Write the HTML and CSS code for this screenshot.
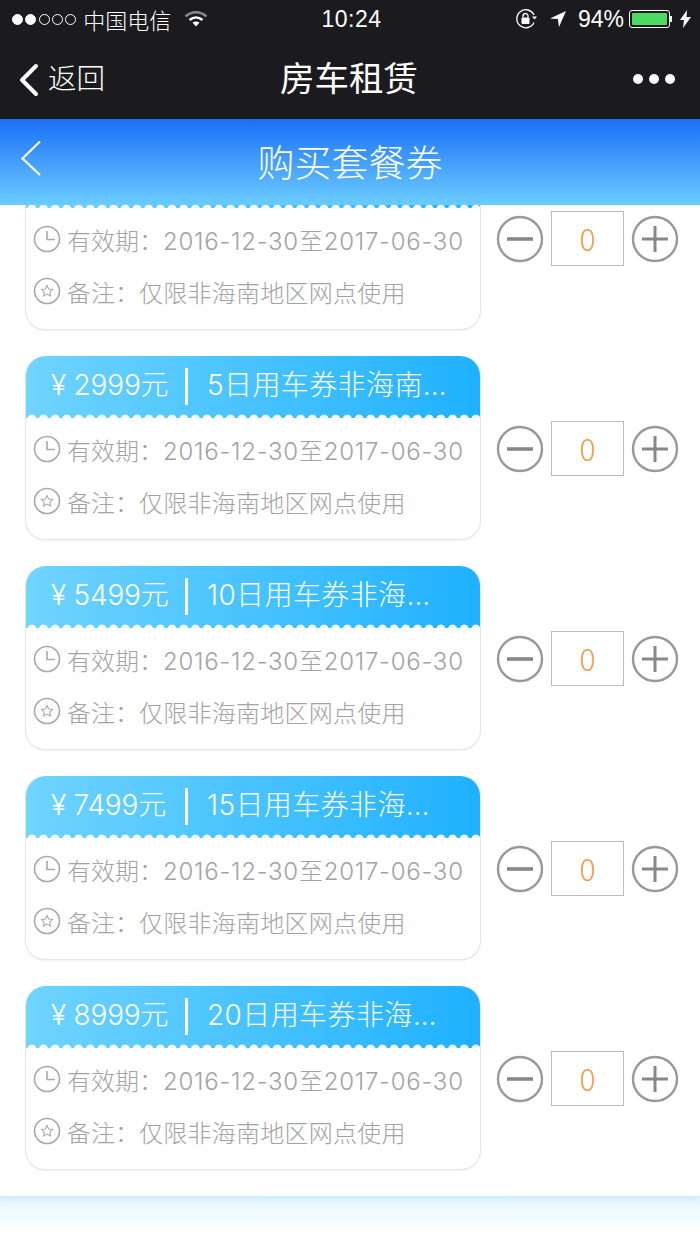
FILE: index.html
```html
<!DOCTYPE html>
<html lang="zh-CN">
<head>
<meta charset="utf-8">
<title>购买套餐券</title>
<link rel="stylesheet" href="styles.css">
</head>
<body>
<div class="phone">
  <div class="status">
    <div class="status-left">
      <span class="dots"><i class="dot on"></i><i class="dot on"></i><i class="dot"></i><i class="dot"></i><i class="dot"></i></span>
      <span class="carrier">中国电信</span>
      <svg class="wifi" width="24" height="18" viewBox="0 0 24 18"><path d="M1.500 6.500C7.500 .8 16.500 .8 22.500 6.500" fill="none" stroke="#8a8a8c" stroke-width="2.400"/><path d="M5.500 10C9.500 6.500 14.500 6.500 18.500 10" fill="none" stroke="#fff" stroke-width="2.400"/><path d="M8.500 12.600C10.500 11 13.500 11 15.500 12.600L12 16.500Z" fill="#fff"/></svg>
    </div>
    <div class="time">10:24</div>
    <div class="status-right">
      <svg class="lock" width="24" height="22" viewBox="0 0 24 22"><path d="M19 14.500A9 9 0 1 1 19 7" fill="none" stroke="#fff" stroke-width="1.300"/><path d="M17 8.500h5l-2.500 3z" fill="#fff"/><rect x="6.500" y="9.500" width="8" height="6.500" rx="1" fill="#fff"/><path d="M8 9.500V8a2.500 2.500 0 0 1 5 0v1.500" fill="none" stroke="#fff" stroke-width="1.300"/></svg>
      <svg class="arrow" width="18" height="18" viewBox="0 0 18 18"><path d="M17 1L1 8.500l7.800.6L10 17z" fill="#fff"/></svg>
      <span class="pct">94%</span>
      <span class="battery"><span class="battery-fill"></span></span>
      <span class="battery-tip"></span>
      <svg class="bolt" width="11" height="18" viewBox="0 0 11 18"><path d="M7 0L0 10h4l-1 8 8-11H6.500z" fill="#fff"/></svg>
    </div>
  </div>
  <div class="nav">
    <div class="nav-back">
      <svg width="22" height="34" viewBox="0 0 22 34"><path d="M18 3L4 17l14 14" fill="none" stroke="#fff" stroke-width="4" stroke-linecap="round" stroke-linejoin="round"/></svg>
      <span>返回</span>
    </div>
    <div class="nav-title">房车租赁</div>
    <div class="nav-more"><i></i><i></i><i></i></div>
  </div>
  <div class="header">
    <svg class="header-back" width="22" height="36" viewBox="0 0 22 36"><path d="M20 1.500L2.500 18.500 20 35" fill="none" stroke="#fff" stroke-width="2.200"/></svg>
    <div class="header-title">购买套餐券</div>
  </div>
  <div class="list">
    <div class="rows">

      <div class="row">
        <div class="card">
          <div class="card-top"></div>
          <div class="card-line line-date"><svg class="ico" viewBox="0 0 28 28"><circle cx="14" cy="14" r="12.500" fill="none" stroke="#aaa" stroke-width="1.600"/><path d="M14 6v8.500h8" fill="none" stroke="#aaa" stroke-width="1.600"/></svg><span>有效期：</span><span class="date">2016-12-30至2017-06-30</span></div>
          <div class="card-line"><svg class="ico" viewBox="0 0 28 28"><circle cx="14" cy="14" r="12.500" fill="none" stroke="#aaa" stroke-width="1.600"/><path d="M14 8.500l1.700 3.500 3.900.5-2.800 2.700.7 3.800-3.500-1.900-3.500 1.900.7-3.800-2.800-2.700 3.900-.5z" fill="none" stroke="#aaa" stroke-width="1.100"/></svg><span>备注：</span><span class="note">仅限非海南地区网点使用</span></div>
        </div>
        <div class="stepper">
          <svg class="btn" viewBox="0 0 48 48"><circle cx="24" cy="24" r="22" fill="none" stroke="#999" stroke-width="2.400"/><path d="M11 24h26" stroke="#888" stroke-width="3.600"/></svg>
          <div class="qty">0</div>
          <svg class="btn" viewBox="0 0 48 48"><circle cx="24" cy="24" r="22" fill="none" stroke="#999" stroke-width="2.400"/><path d="M11 24h26M24 11v26" stroke="#888" stroke-width="3"/></svg>
        </div>
      </div>

      <div class="row">
        <div class="card">
          <div class="card-top"><span class="price">¥ 2999元</span><span class="sep"></span><span class="name">5日用车券非海南…</span></div>
          <div class="card-line line-date"><svg class="ico" viewBox="0 0 28 28"><circle cx="14" cy="14" r="12.500" fill="none" stroke="#aaa" stroke-width="1.600"/><path d="M14 6v8.500h8" fill="none" stroke="#aaa" stroke-width="1.600"/></svg><span>有效期：</span><span class="date">2016-12-30至2017-06-30</span></div>
          <div class="card-line"><svg class="ico" viewBox="0 0 28 28"><circle cx="14" cy="14" r="12.500" fill="none" stroke="#aaa" stroke-width="1.600"/><path d="M14 8.500l1.700 3.500 3.900.5-2.800 2.700.7 3.800-3.500-1.900-3.500 1.900.7-3.800-2.800-2.700 3.900-.5z" fill="none" stroke="#aaa" stroke-width="1.100"/></svg><span>备注：</span><span class="note">仅限非海南地区网点使用</span></div>
        </div>
        <div class="stepper">
          <svg class="btn" viewBox="0 0 48 48"><circle cx="24" cy="24" r="22" fill="none" stroke="#999" stroke-width="2.400"/><path d="M11 24h26" stroke="#888" stroke-width="3.600"/></svg>
          <div class="qty">0</div>
          <svg class="btn" viewBox="0 0 48 48"><circle cx="24" cy="24" r="22" fill="none" stroke="#999" stroke-width="2.400"/><path d="M11 24h26M24 11v26" stroke="#888" stroke-width="3"/></svg>
        </div>
      </div>

      <div class="row">
        <div class="card">
          <div class="card-top"><span class="price">¥ 5499元</span><span class="sep"></span><span class="name">10日用车券非海…</span></div>
          <div class="card-line line-date"><svg class="ico" viewBox="0 0 28 28"><circle cx="14" cy="14" r="12.500" fill="none" stroke="#aaa" stroke-width="1.600"/><path d="M14 6v8.500h8" fill="none" stroke="#aaa" stroke-width="1.600"/></svg><span>有效期：</span><span class="date">2016-12-30至2017-06-30</span></div>
          <div class="card-line"><svg class="ico" viewBox="0 0 28 28"><circle cx="14" cy="14" r="12.500" fill="none" stroke="#aaa" stroke-width="1.600"/><path d="M14 8.500l1.700 3.500 3.900.5-2.800 2.700.7 3.800-3.500-1.900-3.500 1.900.7-3.800-2.800-2.700 3.900-.5z" fill="none" stroke="#aaa" stroke-width="1.100"/></svg><span>备注：</span><span class="note">仅限非海南地区网点使用</span></div>
        </div>
        <div class="stepper">
          <svg class="btn" viewBox="0 0 48 48"><circle cx="24" cy="24" r="22" fill="none" stroke="#999" stroke-width="2.400"/><path d="M11 24h26" stroke="#888" stroke-width="3.600"/></svg>
          <div class="qty">0</div>
          <svg class="btn" viewBox="0 0 48 48"><circle cx="24" cy="24" r="22" fill="none" stroke="#999" stroke-width="2.400"/><path d="M11 24h26M24 11v26" stroke="#888" stroke-width="3"/></svg>
        </div>
      </div>

      <div class="row">
        <div class="card">
          <div class="card-top"><span class="price">¥ 7499元</span><span class="sep"></span><span class="name">15日用车券非海…</span></div>
          <div class="card-line line-date"><svg class="ico" viewBox="0 0 28 28"><circle cx="14" cy="14" r="12.500" fill="none" stroke="#aaa" stroke-width="1.600"/><path d="M14 6v8.500h8" fill="none" stroke="#aaa" stroke-width="1.600"/></svg><span>有效期：</span><span class="date">2016-12-30至2017-06-30</span></div>
          <div class="card-line"><svg class="ico" viewBox="0 0 28 28"><circle cx="14" cy="14" r="12.500" fill="none" stroke="#aaa" stroke-width="1.600"/><path d="M14 8.500l1.700 3.500 3.900.5-2.800 2.700.7 3.800-3.500-1.900-3.500 1.900.7-3.800-2.800-2.700 3.900-.5z" fill="none" stroke="#aaa" stroke-width="1.100"/></svg><span>备注：</span><span class="note">仅限非海南地区网点使用</span></div>
        </div>
        <div class="stepper">
          <svg class="btn" viewBox="0 0 48 48"><circle cx="24" cy="24" r="22" fill="none" stroke="#999" stroke-width="2.400"/><path d="M11 24h26" stroke="#888" stroke-width="3.600"/></svg>
          <div class="qty">0</div>
          <svg class="btn" viewBox="0 0 48 48"><circle cx="24" cy="24" r="22" fill="none" stroke="#999" stroke-width="2.400"/><path d="M11 24h26M24 11v26" stroke="#888" stroke-width="3"/></svg>
        </div>
      </div>

      <div class="row">
        <div class="card">
          <div class="card-top"><span class="price">¥ 8999元</span><span class="sep"></span><span class="name">20日用车券非海…</span></div>
          <div class="card-line line-date"><svg class="ico" viewBox="0 0 28 28"><circle cx="14" cy="14" r="12.500" fill="none" stroke="#aaa" stroke-width="1.600"/><path d="M14 6v8.500h8" fill="none" stroke="#aaa" stroke-width="1.600"/></svg><span>有效期：</span><span class="date">2016-12-30至2017-06-30</span></div>
          <div class="card-line"><svg class="ico" viewBox="0 0 28 28"><circle cx="14" cy="14" r="12.500" fill="none" stroke="#aaa" stroke-width="1.600"/><path d="M14 8.500l1.700 3.500 3.900.5-2.800 2.700.7 3.800-3.500-1.900-3.500 1.900.7-3.800-2.800-2.700 3.900-.5z" fill="none" stroke="#aaa" stroke-width="1.100"/></svg><span>备注：</span><span class="note">仅限非海南地区网点使用</span></div>
        </div>
        <div class="stepper">
          <svg class="btn" viewBox="0 0 48 48"><circle cx="24" cy="24" r="22" fill="none" stroke="#999" stroke-width="2.400"/><path d="M11 24h26" stroke="#888" stroke-width="3.600"/></svg>
          <div class="qty">0</div>
          <svg class="btn" viewBox="0 0 48 48"><circle cx="24" cy="24" r="22" fill="none" stroke="#999" stroke-width="2.400"/><path d="M11 24h26M24 11v26" stroke="#888" stroke-width="3"/></svg>
        </div>
      </div>

    </div>
  </div>
  <div class="foot"></div>
</div>
</body>
</html>
```

FILE: styles.css
```css
* { box-sizing: border-box; }
html, body { margin: 0; padding: 0; }
body {
  width: 700px;
  height: 1245px;
  overflow: hidden;
  background: #fff;
  font-family: "Noto Sans CJK SC", "Noto Sans", sans-serif;
}
.phone { width: 700px; height: 1245px; display: flex; flex-direction: column; }

.status {
  height: 40px;
  background: #1b1a1f;
  color: #fff;
  display: flex;
  align-items: center;
  justify-content: space-between;
  position: relative;
  padding: 0 9px 2px 12px;
}
.status-left, .status-right { display: flex; align-items: center; }
.dots { display: flex; gap: 2.300px; }
.dot { width: 11px; height: 11px; border-radius: 50%; border: 1px solid #fff; display: block; }
.dot.on { background: #fff; }
.carrier { font-size: 22px; line-height: 28px; margin-left: 7px; width: 88px; font-weight: 300; }
.wifi { margin-left: 13px; }
.time {
  position: absolute;
  left: 3px; right: 0; top: 4px;
  text-align: center;
  font-family: "Liberation Sans", sans-serif;
  font-size: 23px;
  line-height: 30px;
  letter-spacing: .5px;
}
.lock { margin-right: 10px; }
.arrow { margin-right: 11px; }
.pct { font-family: "Liberation Sans", sans-serif; font-size: 23px; line-height: 28px; margin-right: 5px; }
.battery { width: 41px; height: 18px; border: 1px solid #fff; border-radius: 3px; padding: 2px; display: block; }
.battery-fill { display: block; height: 100%; width: 100%; background: #4cd964; border-radius: 1px; }
.battery-tip { width: 2px; height: 6px; background: #fff; margin-right: 8px; }

.nav {
  height: 79px;
  background: #1b1a1f;
  color: #fff;
  display: flex;
  align-items: center;
  justify-content: space-between;
  position: relative;
  padding: 0 25px 0 18px;
}
.nav-back { display: flex; align-items: center; gap: 8px; font-size: 28.500px; font-weight: 300; line-height: 40px; }
.nav-back span { margin-top: -5px; }
.nav-back svg { display: block; }
.nav-title {
  position: absolute;
  left: 0; right: 2px; top: 14px;
  text-align: center;
  font-size: 34.500px;
  line-height: 44px;
}
.nav-more { display: flex; gap: 6px; margin-top: -1px; }
.nav-more i { width: 10px; height: 10px; border-radius: 50%; background: #fff; display: block; }

.header {
  height: 86px;
  background: linear-gradient(180deg, #1a6ff8 0%, #6bcdff 100%);
  color: #fff;
  display: flex;
  align-items: center;
  justify-content: center;
  position: relative;
  flex-shrink: 0;
}
.header-title { font-size: 37px; line-height: 50px; font-weight: 300; margin-top: -2px; }
.header-back { position: absolute; left: 20px; top: 21px; }

.list { height: 991px; overflow: hidden; flex-shrink: 0; background: #fff; box-shadow: 0 2px 6px rgba(120, 200, 255, .3); position: relative; }
.rows { margin-top: -59px; padding: 0 0 0 25px; display: flex; flex-direction: column; gap: 26px; }
.row { display: flex; align-items: flex-start; }
.card {
  width: 456px;
  height: 184px;
  border-radius: 20px;
  border: 1px solid #e6e6e6;
  border-top: 0;
  box-shadow: 0 1px 2px rgba(0, 0, 0, .06);
  background: #fff;
  flex-shrink: 0;
  font-family: Inter, "Noto Sans CJK SC", sans-serif;
}
.card-top {
  height: 62px;
  border-radius: 20px 20px 0 0;
  background:
    radial-gradient(circle at 5.800px 6px, #fff 4px, transparent 4.800px) 0 57px / 11.700px 5px repeat-x,
    linear-gradient(90deg, #70d4fe 0%, #1fb1ff 100%);
  color: #fff;
  display: flex;
  align-items: center;
  padding: 0 0 5px 25px;
  font-weight: 300;
}
.price { font-size: 28px; width: 117px; white-space: nowrap; line-height: 36px; letter-spacing: -.2px; }
.sep { width: 3px; height: 37px; background: #fff; margin: 4px 19px 0 17px; flex-shrink: 0; }
.name { font-size: 28px; line-height: 36px; white-space: nowrap; letter-spacing: .4px; }

.card-line {
  height: 52px;
  display: flex;
  align-items: center;
  font-size: 24px;
  color: #a3a3a3;
  padding-left: 7px;
  font-weight: 300;
  white-space: nowrap;
}
.line-date { margin-top: 5px; }
.ico { width: 28px; height: 28px; margin-right: 6px; flex-shrink: 0; }
.date { letter-spacing: .75px; }
.note { letter-spacing: .25px; }

.stepper { display: flex; align-items: center; margin: 65px 0 0 15px; }
.btn { width: 48px; height: 48px; flex-shrink: 0; }
.qty {
  width: 73px;
  height: 55px;
  margin: 0 7px 0 7px;
  border: 1px solid #bbb;
  color: #e8a050;
  font-size: 30px;
  font-weight: 300;
  line-height: 53px;
  text-align: center;
}

.foot { flex: 1; background: linear-gradient(180deg, #e3f6ff 0%, #fff 75%); }
```
